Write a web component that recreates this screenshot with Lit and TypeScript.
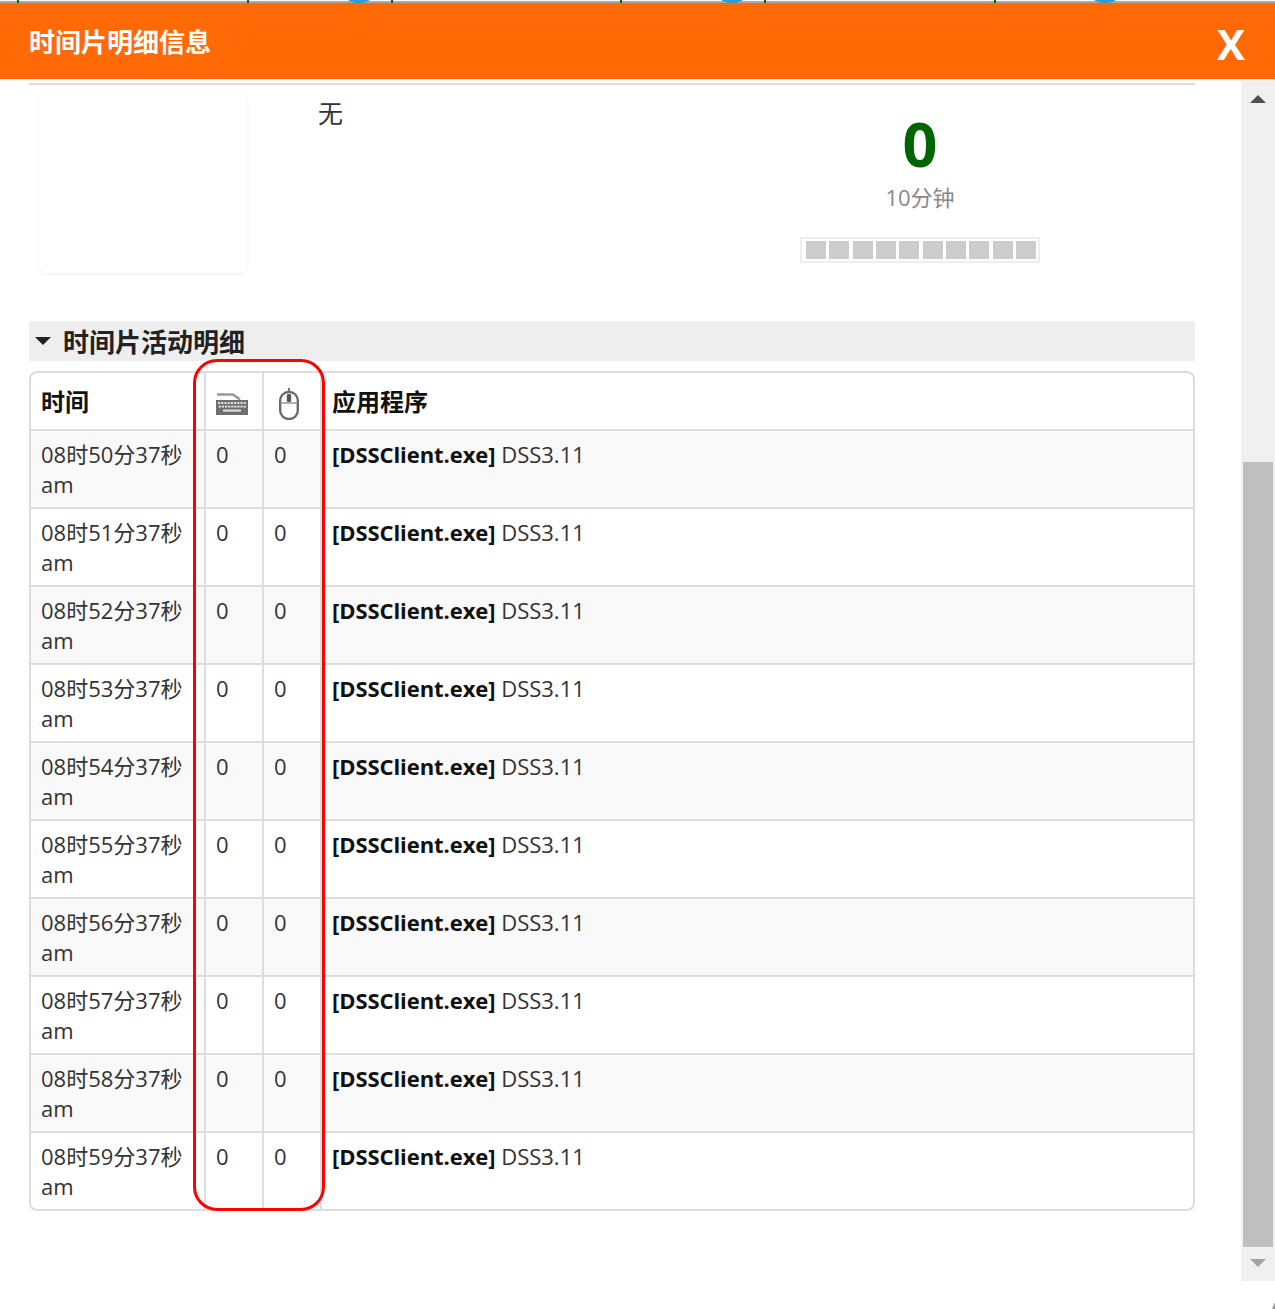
import { LitElement, html, css, svg } from "lit";
import { customElement } from "lit/decorators.js";

const rows = ["50", "51", "52", "53", "54", "55", "56", "57", "58", "59"];
const ticks = [
  { cls: "tick", x: 17 }, { cls: "tick", x: 247 }, { cls: "blue", x: 347 }, { cls: "tick", x: 391 },
  { cls: "tick", x: 620 }, { cls: "blue", x: 720 }, { cls: "tick", x: 764 }, { cls: "tick", x: 994 }, { cls: "blue", x: 1093 },
];

const keyboardIcon = html`<svg class="ico kb" width="32" height="23" viewBox="0 0 32 23">
  <path d="M1 2.5h16l7 5" fill="none" stroke="#999" stroke-width="2.6"/>
  <rect x="0" y="8" width="32" height="15" fill="#6e6e6e"/>
  <g fill="#dcdcdc">
    ${[0, 1, 2, 3, 4, 5, 6, 7, 8].map(
      (i) => svg`<rect x="${2 + i * 3.2}" y="10" width="2.2" height="2"/><rect x="${2.8 + i * 3.1}" y="13.6" width="2.2" height="2"/>`
    )}
    <rect x="7" y="17.5" width="18" height="2.2"/>
  </g>
</svg>`;

const mouseIcon = html`<svg class="ico ms" width="20" height="32" viewBox="0 0 20 32">
  <path d="M10 0v5" stroke="#777" stroke-width="2" fill="none"/>
  <rect x="1.2" y="4" width="17.6" height="27" rx="8.5" fill="#fff" stroke="#6a6a6a" stroke-width="2.4"/>
  <path d="M1.5 15h17" stroke="#999" stroke-width="1.6"/>
  <rect x="7.8" y="6" width="4.4" height="8" rx="1.5" fill="#555"/>
</svg>`;

@customElement("app-root")
export class AppRoot extends LitElement {
  static styles = css`
    :host {
      display: block;
      position: relative;
      width: 1275px;
      height: 1309px;
      overflow: hidden;
      background: #fff;
      font-family: "Open Sans", "Noto Sans CJK SC", sans-serif;
      color: #333;
    }
    .strip { position: relative; height: 3px; background: linear-gradient(#fff 0, #fff 1px, #a9a9a9 1px); overflow: hidden; }
    .tick { position: absolute; top: 0; width: 2px; height: 3px; background: #0a640a; }
    .blue { position: absolute; top: -8px; width: 24px; height: 11px; box-sizing: border-box; border: 3px solid #2f9bd8; border-radius: 50%; }
    .head {
      height: 76px;
      background: #ff6a07;
      color: #fff;
      display: flex;
      align-items: center;
      justify-content: space-between;
      padding: 0 29px;
      box-shadow: 0 1px 1px rgba(0, 0, 0, 0.07);
      position: relative;
    }
    .title { font-size: 26px; font-weight: 700; line-height: 36px; margin-top: 2px; }
    .close { font-size: 42px; font-weight: 700; line-height: 50px; margin-right: 1px; margin-top: 5px; }
    .body { display: flex; height: 1200px; margin-top: 2px; }
    .content { width: 1241px; box-sizing: border-box; padding: 2px 46px 0 29px; }
    .rule { height: 2px; background: #ddd; }
    .summary { display: flex; height: 180px; margin: 8px 0 48px 10px; }
    .card { width: 208px; height: 180px; border-radius: 8px; box-shadow: 0 1px 4px rgba(0, 0, 0, 0.07); }
    .note { width: 482px; padding: 5px 0 0 71px; box-sizing: border-box; font-size: 25px; line-height: 30px; }
    .score { width: 240px; margin-left: 71px; display: flex; flex-direction: column; align-items: center; }
    .num { font-size: 61px; font-weight: 700; color: #006400; line-height: 84px; height: 84px; margin-top: 9px; }
    .dur { font-size: 22px; color: #888; line-height: 30px; margin-top: -4px; }
    .bar {
      width: 240px;
      height: 26px;
      box-sizing: border-box;
      border: 2px solid #eee;
      padding: 2px 2px 2px 4px;
      margin-top: 25px;
      display: flex;
      gap: 3.33px;
    }
    .bar i { width: 20px; background: #ccc; }
    .section {
      height: 40px;
      background: #eee;
      display: flex;
      align-items: center;
      font-size: 26px;
      font-weight: 700;
      color: #222;
    }
    .tri { width: 0; height: 0; border-left: 8px solid transparent; border-right: 8px solid transparent; border-top: 8px solid #222; margin: 0 12px 0 6px; }
    .section span { line-height: 40px; margin-top: 2px; }
    .wrap { position: relative; margin-top: 10px; border: 2px solid #ddd; border-radius: 8px; width: 1166px; box-sizing: border-box; }
    table { width: 1162px; border-collapse: separate; border-spacing: 0; table-layout: fixed; font-size: 22px; line-height: 30px; }
    th, td { padding: 8px 10px; text-align: left; vertical-align: top; box-sizing: border-box; }
    th { height: 56px; padding-top: 0; padding-bottom: 0; font-size: 24px; font-weight: 700; color: #111; vertical-align: middle; }
    .tx { display: block; margin-top: 2px; }
    td { height: 78px; border-top: 2px solid #ddd; }
    th + th, td + td { border-left: 2px solid #ddd; }
    tbody tr:nth-child(odd) td { background: #f9f9f9; }
    tbody tr:last-child td:first-child { border-bottom-left-radius: 6px; }
    tbody tr:last-child td:last-child { border-bottom-right-radius: 6px; }
    b { font-weight: 700; color: #111; letter-spacing: -0.07px; }
    .c1 { width: 173px; }
    .c2, .c3 { width: 58px; }
    .ico { display: block; filter: blur(0.35px); }
    .kb { margin-top: 5px; }
    .ms { margin: 5px 0 0 5px; }
    .circle {
      position: absolute;
      left: 162px;
      top: -14px;
      width: 132px;
      height: 852px;
      box-sizing: border-box;
      border: 3px solid #f00;
      border-radius: 24px;
      pointer-events: none;
    }
    .scroll { width: 34px; height: 1200px; background: #f0f0f0; display: flex; flex-direction: column; align-items: center; padding-top: 14px; box-sizing: border-box; }
    .up { width: 0; height: 0; border-left: 8px solid transparent; border-right: 8px solid transparent; border-bottom: 8px solid #505050; }
    .thumb { width: 30px; height: 785px; margin-top: 359px; background: #bfbfbf; flex: none; }
    .down { width: 0; height: 0; margin-top: 12px; border-left: 8px solid transparent; border-right: 8px solid transparent; border-top: 8px solid #a3a3a3; }
    .grip { position: absolute; right: 0; bottom: 0; width: 0; height: 0; border-left: 3px solid transparent; border-bottom: 7px solid #999; }
  `;

  render() {
    return html`
      <div class="strip">
        ${ticks.map((t) => html`<span class=${t.cls} style="left:${t.x}px"></span>`)}
      </div>
      <div class="head">
        <div class="title">时间片明细信息</div>
        <div class="close">X</div>
      </div>
      <div class="body">
        <div class="content">
          <div class="rule"></div>
          <div class="summary">
            <div class="card"></div>
            <div class="note">无</div>
            <div class="score">
              <div class="num">0</div>
              <div class="dur">10分钟</div>
              <div class="bar">${Array.from({ length: 10 }, () => html`<i></i>`)}</div>
            </div>
          </div>
          <div class="section"><i class="tri"></i><span>时间片活动明细</span></div>
          <div class="wrap">
            <table>
              <colgroup>
                <col class="c1" /><col class="c2" /><col class="c3" /><col />
              </colgroup>
              <thead>
                <tr>
                  <th><span class="tx">时间</span></th>
                  <th>${keyboardIcon}</th>
                  <th>${mouseIcon}</th>
                  <th><span class="tx">应用程序</span></th>
                </tr>
              </thead>
              <tbody>
                ${rows.map(
                  (m) => html`<tr>
                    <td>${`08时${m}分37秒 am`}</td>
                    <td>0</td>
                    <td>0</td>
                    <td><b>[DSSClient.exe]</b> DSS3.11</td>
                  </tr>`
                )}
              </tbody>
            </table>
            <div class="circle"></div>
          </div>
        </div>
        <div class="scroll">
          <div class="up"></div>
          <div class="thumb"></div>
          <div class="down"></div>
        </div>
      </div>
      <div class="grip"></div>
    `;
  }
}
